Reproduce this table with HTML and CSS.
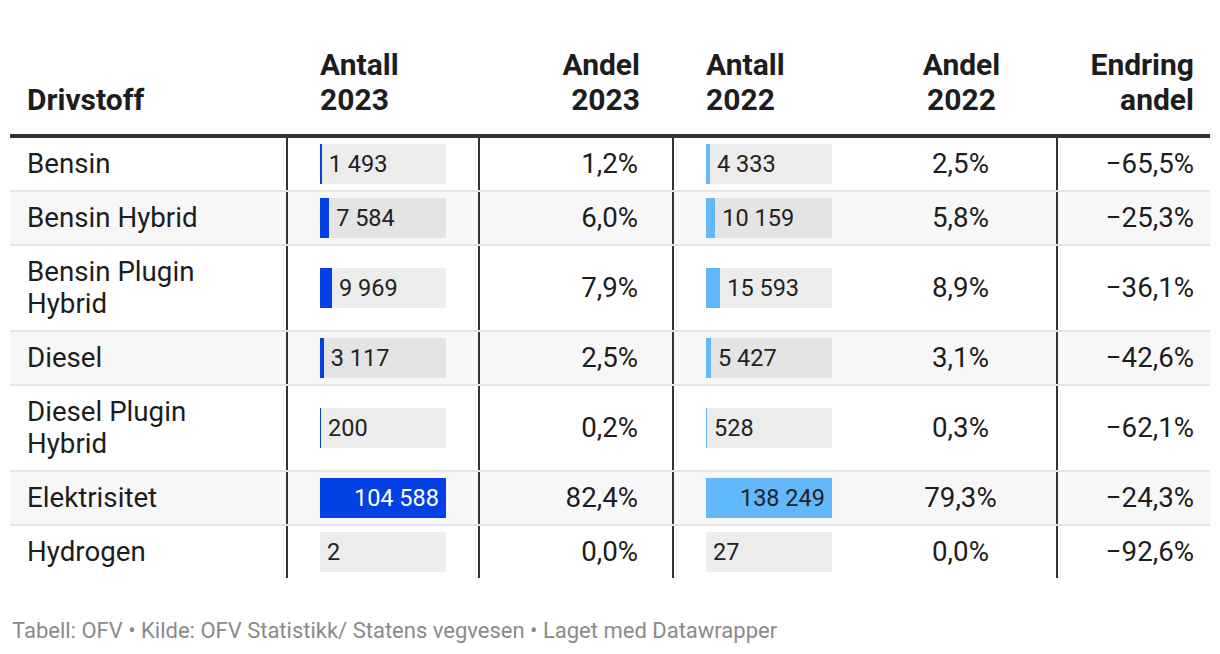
FILE: index.html
```html
<!DOCTYPE html>
<html lang="no">
<head>
<meta charset="utf-8">
<title>Drivstoff</title>
<link rel="stylesheet" href="styles.css">
</head>
<body>
<div class="chart">
  <div class="row head">
    <div class="c c1">Drivstoff</div>
    <div class="c c2">Antall<br>2023</div>
    <div class="c c3">Andel<br>2023</div>
    <div class="c c4">Antall<br>2022</div>
    <div class="c c5">Andel<br>2022</div>
    <div class="c c6">Endring<br>andel</div>
  </div>

  <div class="row">
    <div class="c c1">Bensin</div>
    <div class="c c2"><div class="track"><div class="fill a" style="width:1.8px"></div><span class="lbl">1 493</span></div></div>
    <div class="c c3">1,2%</div>
    <div class="c c4"><div class="track"><div class="fill b" style="width:3.95px"></div><span class="lbl">4 333</span></div></div>
    <div class="c c5">2,5%</div>
    <div class="c c6">−65,5%</div>
  </div>

  <div class="row alt">
    <div class="c c1">Bensin Hybrid</div>
    <div class="c c2"><div class="track"><div class="fill a" style="width:9.14px"></div><span class="lbl">7 584</span></div></div>
    <div class="c c3">6,0%</div>
    <div class="c c4"><div class="track"><div class="fill b" style="width:9.26px"></div><span class="lbl">10 159</span></div></div>
    <div class="c c5">5,8%</div>
    <div class="c c6">−25,3%</div>
  </div>

  <div class="row">
    <div class="c c1">Bensin Plugin<br>Hybrid</div>
    <div class="c c2"><div class="track"><div class="fill a" style="width:12.01px"></div><span class="lbl">9 969</span></div></div>
    <div class="c c3">7,9%</div>
    <div class="c c4"><div class="track"><div class="fill b" style="width:14.21px"></div><span class="lbl">15 593</span></div></div>
    <div class="c c5">8,9%</div>
    <div class="c c6">−36,1%</div>
  </div>

  <div class="row alt">
    <div class="c c1">Diesel</div>
    <div class="c c2"><div class="track"><div class="fill a" style="width:3.76px"></div><span class="lbl">3 117</span></div></div>
    <div class="c c3">2,5%</div>
    <div class="c c4"><div class="track"><div class="fill b" style="width:4.95px"></div><span class="lbl">5 427</span></div></div>
    <div class="c c5">3,1%</div>
    <div class="c c6">−42,6%</div>
  </div>

  <div class="row">
    <div class="c c1">Diesel Plugin<br>Hybrid</div>
    <div class="c c2"><div class="track"><div class="fill a" style="width:1px"></div><span class="lbl">200</span></div></div>
    <div class="c c3">0,2%</div>
    <div class="c c4"><div class="track"><div class="fill b" style="width:1px"></div><span class="lbl">528</span></div></div>
    <div class="c c5">0,3%</div>
    <div class="c c6">−62,1%</div>
  </div>

  <div class="row alt">
    <div class="c c1">Elektrisitet</div>
    <div class="c c2"><div class="track"><div class="fill a" style="width:126px"></div><span class="lbl in light">104 588</span></div></div>
    <div class="c c3">82,4%</div>
    <div class="c c4"><div class="track"><div class="fill b" style="width:126px"></div><span class="lbl in">138 249</span></div></div>
    <div class="c c5">79,3%</div>
    <div class="c c6">−24,3%</div>
  </div>

  <div class="row last">
    <div class="c c1">Hydrogen</div>
    <div class="c c2"><div class="track"><div class="fill a" style="width:0px"></div><span class="lbl">2</span></div></div>
    <div class="c c3">0,0%</div>
    <div class="c c4"><div class="track"><div class="fill b" style="width:0px"></div><span class="lbl">27</span></div></div>
    <div class="c c5">0,0%</div>
    <div class="c c6">−92,6%</div>
  </div>
</div>
<div class="footer">Tabell: OFV • Kilde: OFV Statistikk/ Statens vegvesen • Laget med Datawrapper</div>
</body>
</html>
```

FILE: styles.css
```css
* { box-sizing: border-box; }
html, body { margin: 0; padding: 0; background: #fff; }
body {
  font-family: Roboto, "Liberation Sans", Arial, sans-serif;
  color: #1d1d1d;
  width: 1220px;
  height: 654px;
  overflow: hidden;
}
.chart {
  margin: 0 10px;
  width: 1200px;
}
.row {
  display: grid;
  grid-template-columns: 278px 192px 194px 191px 193px 152px;
  border-bottom: 2px solid #e6e6e6;
  font-size: 27.7px;
  line-height: 32px;
}
.row.alt { background: #f7f7f7; }
.row.last { border-bottom: none; }
.c {
  padding: 10px 0;
  display: flex;
  align-items: center;
}
.c1 { padding-left: 17px; border-right: 2px solid #333; }
.c2 { padding-left: 32px; border-right: 2px solid #333; }
.c3 { justify-content: flex-end; text-align: right; padding-right: 34px; border-right: 2px solid #333; }
.c4 { padding-left: 32px; }
.c5 { justify-content: center; text-align: center; border-right: 2px solid #333; }
.c6 { justify-content: flex-end; text-align: right; padding-right: 16px; }

.row.head {
  height: 138px;
  border-bottom: 4px solid #333;
  font-weight: 700;
  font-size: 30px;
  line-height: 35px;
}
.row.head .c {
  border-right: none;
  align-items: flex-end;
  padding-bottom: 17px;
}

.track {
  position: relative;
  width: 126px;
  height: 40px;
  margin: -4px 0;
  background: rgba(0, 0, 0, 0.075);
  display: flex;
  align-items: center;
}
.fill { height: 40px; flex: none; }
.fill.a { background: #0340e6; }
.fill.b { background: #62b8fc; }
.lbl {
  font-size: 23.5px;
  margin-left: 7px;
  color: #222;
}
.lbl.in {
  position: absolute;
  right: 7px;
  margin: 0;
}
.lbl.light { color: #fff; }

.footer {
  margin: 40px 0 0 12px;
  font-size: 22px;
  line-height: 26px;
  color: #8a8a8a;
}
```
